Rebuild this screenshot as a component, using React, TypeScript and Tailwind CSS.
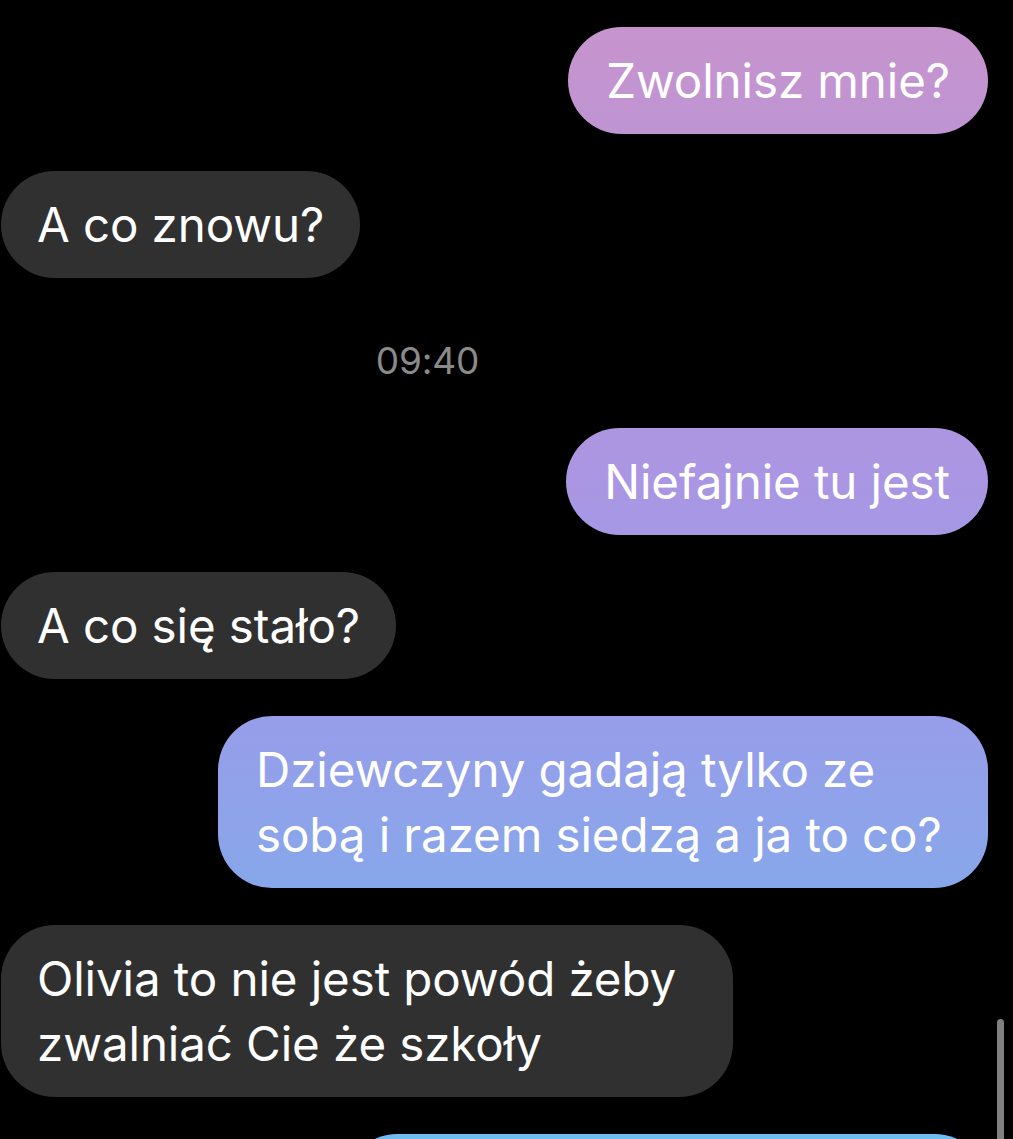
const sentBg =
  "bg-fixed bg-[linear-gradient(180deg,#c994cc_0%,#c094d2_10%,#aa96e3_42%,#949fea_66%,#87a7ea_78%,#70bcf1_100%)]"

function Sent({ children }: { children: React.ReactNode }) {
  return (
    <div className="flex justify-end pr-[25px]">
      <div className={`${sentBg} max-w-[770px] rounded-[54px] px-[38px] py-[21px] text-white`}>
        {children}
      </div>
    </div>
  )
}

function Received({ children }: { children: React.ReactNode }) {
  return (
    <div className="flex justify-start pl-px">
      <div className="max-w-[732px] rounded-[54px] bg-[#303030] px-[36px] py-[21px] text-white">
        {children}
      </div>
    </div>
  )
}

export default function App() {
  return (
    <div
      className="relative h-[1139px] overflow-hidden bg-black text-[47.5px] leading-[65px] tracking-[-0.1px]"
      style={{ fontFamily: "Inter, 'Noto Sans', sans-serif" }}
    >
      <div className="flex flex-col gap-[37px] pt-[27px]">
        <Sent>Zwolnisz mnie?</Sent>
        <Received>A co znowu?</Received>
        <div className="mt-[21px] mb-[5px] flex justify-center pr-[158px] text-[37px] leading-[50px] text-[#8a8a8a]">
          09:40
        </div>
        <Sent>Niefajnie tu jest</Sent>
        <Received>A co się stało?</Received>
        <Sent>Dziewczyny gadają tylko ze sobą i razem siedzą a ja to co?</Sent>
        <Received>Olivia to nie jest powód żeby zwalniać Cie że szkoły</Received>
        {/* next message, only its top edge is on screen */}
        <div className="flex justify-end pr-[25px]">
          <div className={`${sentBg} h-[107px] w-[644px] rounded-[54px]`} />
        </div>
      </div>
      <div className="absolute right-[9px] top-[1019px] h-[140px] w-[7px] rounded-full bg-[#808080]" />
    </div>
  )
}
